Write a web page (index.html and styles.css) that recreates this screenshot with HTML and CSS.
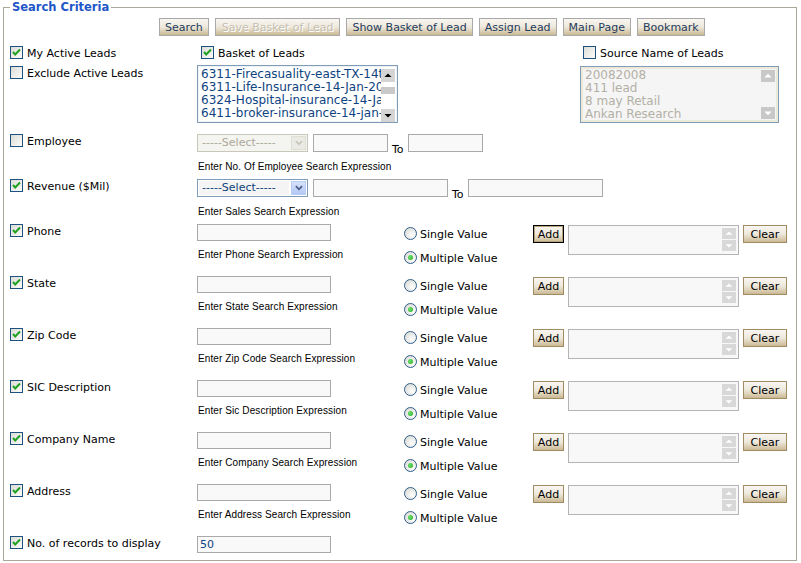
FILE: index.html
```html
<!DOCTYPE html>
<html lang="en">
<head>
  <meta charset="UTF-8">
  <title>Search Criteria</title>
  <link rel="stylesheet" href="styles.css">
</head>
<body>
  <fieldset class="criteria">
    <legend>Search Criteria</legend>

    <div class="toolbar">
      <button class="btn">Search</button>
      <button class="btn" disabled>Save Basket of Lead</button>
      <button class="btn">Show Basket of Lead</button>
      <button class="btn">Assign Lead</button>
      <button class="btn">Main Page</button>
      <button class="btn">Bookmark</button>
    </div>

    <div class="row row-top">
      <label class="check"><span class="cb on"><svg viewBox="0 0 11 11"><polyline points="2,5 4.2,7.5 9,2.5"/></svg></span>My Active Leads</label>
      <label class="check basket"><span class="cb on"><svg viewBox="0 0 11 11"><polyline points="2,5 4.2,7.5 9,2.5"/></svg></span>Basket of Leads</label>
      <label class="check source"><span class="cb"></span>Source Name of Leads</label>
    </div>

    <div class="row row-lists">
      <label class="check"><span class="cb"></span>Exclude Active Leads</label>
      <div class="listbox basket-list">
        <div class="list-items">
          <div>6311-Firecasuality-east-TX-14th-Jan</div>
          <div>6311-Life-Insurance-14-Jan-2008</div>
          <div>6324-Hospital-insurance-14-Jan</div>
          <div>6411-broker-insurance-14-jan-08</div>
        </div>
        <div class="scroll">
          <span class="arrow"><svg viewBox="0 0 13 13"><path d="M3 8h7L6.5 4.5z"/></svg></span>
          <span class="thumb"></span>
          <span class="arrow"><svg viewBox="0 0 13 13"><path d="M3 5h7L6.5 8.5z"/></svg></span>
        </div>
      </div>
      <div class="listbox source-list">
        <div class="list-items">
          <div>20082008</div>
          <div>411 lead</div>
          <div>8 may Retail</div>
          <div>Ankan Research</div>
        </div>
        <div class="scroll">
          <span class="arrow"><svg viewBox="0 0 13 13"><path d="M2.5 8h8L6.5 4z"/></svg></span>
          <span class="arrow"><svg viewBox="0 0 13 13"><path d="M2.5 5h8L6.5 9z"/></svg></span>
        </div>
      </div>
    </div>

    <div class="row row-range">
      <label class="check"><span class="cb"></span>Employee</label>
      <div class="range-cell">
        <div class="range">
          <div class="select disabled"><span class="select-text">-----Select-----</span><span class="drop"><svg viewBox="0 0 9 6"><path d="M1 1l3.5 3.5L8 1"/></svg></span></div>
          <input class="field short" type="text">
          <span class="to">To</span>
          <input class="field short" type="text">
        </div>
        <div class="hint">Enter No. Of Employee Search Expression</div>
      </div>
    </div>

    <div class="row row-range">
      <label class="check"><span class="cb on"><svg viewBox="0 0 11 11"><polyline points="2,5 4.2,7.5 9,2.5"/></svg></span>Revenue ($Mil)</label>
      <div class="range-cell">
        <div class="range">
          <div class="select"><span class="select-text">-----Select-----</span><span class="drop"><svg viewBox="0 0 9 6"><path d="M1 1l3.5 3.5L8 1"/></svg></span></div>
          <input class="field long" type="text">
          <span class="to">To</span>
          <input class="field long" type="text">
        </div>
        <div class="hint">Enter Sales Search Expression</div>
      </div>
    </div>

    <div class="row row-field">
      <label class="check"><span class="cb on"><svg viewBox="0 0 11 11"><polyline points="2,5 4.2,7.5 9,2.5"/></svg></span>Phone</label>
      <div><input class="field" type="text"><div class="hint">Enter Phone Search Expression</div></div>
      <div class="radios">
        <label class="radio"><span class="rb"></span>Single Value</label>
        <label class="radio"><span class="rb on"></span>Multiple Value</label>
      </div>
      <button class="btn small add focus">Add</button>
      <div class="mini-list"><div class="scroll"><span class="arrow"><svg viewBox="0 0 13 13"><path d="M2.5 8h8L6.5 4z"/></svg></span><span class="arrow"><svg viewBox="0 0 13 13"><path d="M2.5 5h8L6.5 9z"/></svg></span></div></div>
      <button class="btn small clear">Clear</button>
    </div>

    <div class="row row-field">
      <label class="check"><span class="cb on"><svg viewBox="0 0 11 11"><polyline points="2,5 4.2,7.5 9,2.5"/></svg></span>State</label>
      <div><input class="field" type="text"><div class="hint">Enter State Search Expression</div></div>
      <div class="radios">
        <label class="radio"><span class="rb"></span>Single Value</label>
        <label class="radio"><span class="rb on"></span>Multiple Value</label>
      </div>
      <button class="btn small add">Add</button>
      <div class="mini-list"><div class="scroll"><span class="arrow"><svg viewBox="0 0 13 13"><path d="M2.5 8h8L6.5 4z"/></svg></span><span class="arrow"><svg viewBox="0 0 13 13"><path d="M2.5 5h8L6.5 9z"/></svg></span></div></div>
      <button class="btn small clear">Clear</button>
    </div>

    <div class="row row-field">
      <label class="check"><span class="cb on"><svg viewBox="0 0 11 11"><polyline points="2,5 4.2,7.5 9,2.5"/></svg></span>Zip Code</label>
      <div><input class="field" type="text"><div class="hint">Enter Zip Code Search Expression</div></div>
      <div class="radios">
        <label class="radio"><span class="rb"></span>Single Value</label>
        <label class="radio"><span class="rb on"></span>Multiple Value</label>
      </div>
      <button class="btn small add">Add</button>
      <div class="mini-list"><div class="scroll"><span class="arrow"><svg viewBox="0 0 13 13"><path d="M2.5 8h8L6.5 4z"/></svg></span><span class="arrow"><svg viewBox="0 0 13 13"><path d="M2.5 5h8L6.5 9z"/></svg></span></div></div>
      <button class="btn small clear">Clear</button>
    </div>

    <div class="row row-field">
      <label class="check"><span class="cb on"><svg viewBox="0 0 11 11"><polyline points="2,5 4.2,7.5 9,2.5"/></svg></span>SIC Description</label>
      <div><input class="field" type="text"><div class="hint">Enter Sic Description Expression</div></div>
      <div class="radios">
        <label class="radio"><span class="rb"></span>Single Value</label>
        <label class="radio"><span class="rb on"></span>Multiple Value</label>
      </div>
      <button class="btn small add">Add</button>
      <div class="mini-list"><div class="scroll"><span class="arrow"><svg viewBox="0 0 13 13"><path d="M2.5 8h8L6.5 4z"/></svg></span><span class="arrow"><svg viewBox="0 0 13 13"><path d="M2.5 5h8L6.5 9z"/></svg></span></div></div>
      <button class="btn small clear">Clear</button>
    </div>

    <div class="row row-field">
      <label class="check"><span class="cb on"><svg viewBox="0 0 11 11"><polyline points="2,5 4.2,7.5 9,2.5"/></svg></span>Company Name</label>
      <div><input class="field" type="text"><div class="hint">Enter Company Search Expression</div></div>
      <div class="radios">
        <label class="radio"><span class="rb"></span>Single Value</label>
        <label class="radio"><span class="rb on"></span>Multiple Value</label>
      </div>
      <button class="btn small add">Add</button>
      <div class="mini-list"><div class="scroll"><span class="arrow"><svg viewBox="0 0 13 13"><path d="M2.5 8h8L6.5 4z"/></svg></span><span class="arrow"><svg viewBox="0 0 13 13"><path d="M2.5 5h8L6.5 9z"/></svg></span></div></div>
      <button class="btn small clear">Clear</button>
    </div>

    <div class="row row-field">
      <label class="check"><span class="cb on"><svg viewBox="0 0 11 11"><polyline points="2,5 4.2,7.5 9,2.5"/></svg></span>Address</label>
      <div><input class="field" type="text"><div class="hint">Enter Address Search Expression</div></div>
      <div class="radios">
        <label class="radio"><span class="rb"></span>Single Value</label>
        <label class="radio"><span class="rb on"></span>Multiple Value</label>
      </div>
      <button class="btn small add">Add</button>
      <div class="mini-list"><div class="scroll"><span class="arrow"><svg viewBox="0 0 13 13"><path d="M2.5 8h8L6.5 4z"/></svg></span><span class="arrow"><svg viewBox="0 0 13 13"><path d="M2.5 5h8L6.5 9z"/></svg></span></div></div>
      <button class="btn small clear">Clear</button>
    </div>

    <div class="row row-records">
      <label class="check"><span class="cb on"><svg viewBox="0 0 11 11"><polyline points="2,5 4.2,7.5 9,2.5"/></svg></span>No. of records to display</label>
      <div><input class="field records" type="text" value="50"></div>
    </div>
  </fieldset>
</body>
</html>
```

FILE: styles.css
```css
body {
  margin: 0;
  background: #fff;
  color: #000;
  font-family: "DejaVu Sans", Verdana, sans-serif;
  font-size: 11px;
}
.criteria {
  margin: 0 4px 0 3px;
  padding: 0 6px 7px 6px;
  border: 1px solid #aca899;
  min-width: 0;
}
legend {
  padding: 0 2px;
  font-weight: bold;
  font-size: 11.5px;
  line-height: 14px;
  color: #1f56c7;
}

/* buttons */
.toolbar {
  display: flex;
  gap: 6px;
  height: 18px;
  margin-top: 4px;
  padding-left: 149px;
}
.btn {
  box-sizing: border-box;
  height: 18px;
  padding: 0 5px;
  border: 1px solid #a9a9a9;
  background: linear-gradient(#f8f6f1, #eee8dc 50%, #d9ccb0 80%, #c9b894);
  font-family: "DejaVu Sans", Verdana, sans-serif;
  font-size: 11px;
  line-height: 15px;
  color: #1e3c5c;
  cursor: pointer;
}
.btn:disabled {
  padding: 0 6px;
  color: #c6bfb0;
  text-shadow: 1px 1px 0 #fff;
}
.btn.small {
  margin-top: 2px;
  border-color: #a08b62;
  color: #000;
  padding: 0;
}
.btn.add {
  width: 31px;
}
.btn.clear {
  width: 44px;
}
.btn.focus {
  border-color: #000;
  box-shadow: inset 0 0 0 1px #b8a47c;
}

/* rows */
.row {
  display: grid;
  grid-template-columns: 187px 207px 129px 35px 175px 1fr;
  align-items: start;
}
.row-top {
  height: 20px;
  margin-top: 9px;
}
.row-lists {
  height: 68px;
}
.row-range {
  height: 45px;
}
.row-field {
  height: 52px;
}
.row-records {
  height: 18px;
}

/* checkboxes */
.check {
  display: flex;
  align-items: flex-start;
  gap: 4px;
  margin-top: 1px;
  line-height: 15px;
  white-space: nowrap;
}
.check.basket {
  margin-left: 4px;
}
.check.source {
  grid-column: 5 / 7;
  margin-left: 15px;
}
.cb {
  box-sizing: border-box;
  width: 13px;
  height: 13px;
  flex: none;
  border: 1px solid #1c5180;
  background: linear-gradient(135deg, #dcdcd7, #fbfbf9);
  display: flex;
}
.cb svg {
  width: 11px;
  height: 11px;
}
.cb polyline {
  fill: none;
  stroke: #21a121;
  stroke-width: 2;
}

/* radios */
.radios {
  display: flex;
  flex-direction: column;
  gap: 11px;
  margin-top: 4px;
}
.radio {
  display: flex;
  align-items: flex-start;
  gap: 3px;
  height: 13px;
  line-height: 15px;
  white-space: nowrap;
}
.rb {
  box-sizing: border-box;
  width: 13px;
  height: 13px;
  flex: none;
  border-radius: 50%;
  border: 1px solid #2f5e8c;
  background: radial-gradient(circle at 65% 65%, #fff, #dcdcd7 80%);
  display: flex;
  align-items: center;
  justify-content: center;
}
.rb.on::after {
  content: "";
  width: 5px;
  height: 5px;
  border-radius: 50%;
  background: radial-gradient(circle at 40% 40%, #6ee46e, #1ea81e);
}

/* list boxes */
.listbox {
  box-sizing: border-box;
  display: flex;
  overflow: hidden;
  border: 1px solid #7f9db9;
}
.list-items {
  flex: 1;
  overflow: hidden;
  white-space: nowrap;
  font-size: 12px;
  line-height: 13px;
  padding: 2px 0 0 3px;
}
.basket-list {
  width: 201px;
  height: 58px;
  color: #0e4380;
  box-shadow: inset 0 0 0 1px #eef2f6;
}
.basket-list .scroll {
  width: 14px;
  padding: 3px 2px 0 0;
}
.basket-list .arrow {
  background: #d4d4d4;
  height: 13px;
}
.basket-list .arrow path {
  fill: #000;
}
.thumb {
  display: block;
  height: 7px;
  margin: 5px 0 auto;
  background: #c9c9c9;
}
.source-list {
  grid-column: 5 / 7;
  margin: 1px 0 0 12px;
  width: 199px;
  height: 57px;
  background: #f5f5f5;
  box-shadow: inset 0 0 0 2px #ece9d8;
  padding: 0 2px 0 0;
}
.source-list .list-items {
  padding-left: 4px;
  color: #b3b0a6;
}
.source-list .scroll {
  width: 14px;
  padding: 3px 1px 3px 0;
  justify-content: space-between;
}
.scroll {
  display: flex;
  flex-direction: column;
}
.arrow {
  display: flex;
  background: #c8c8c8;
  height: 12px;
}
.arrow svg {
  width: 100%;
  height: 100%;
}
.arrow path {
  fill: #fff;
}

/* selects and inputs */
.range-cell {
  grid-column: 2 / 7;
}
.range {
  display: flex;
  align-items: flex-start;
  height: 19px;
  margin-top: 1px;
}
.select {
  box-sizing: border-box;
  display: flex;
  align-items: center;
  width: 111px;
  height: 18px;
  border: 1px solid #7f9db9;
  background: #fff;
  color: #0e3f7a;
  padding: 1px;
}
.select-text {
  flex: 1;
  padding-left: 3px;
  line-height: 14px;
  background: #f4f4f4;
}
.drop {
  box-sizing: border-box;
  width: 15px;
  height: 14px;
  display: flex;
  align-items: center;
  justify-content: center;
  margin-left: 2px;
  border: 1px solid #b9cdf2;
  background: linear-gradient(#d6e2fb, #b2c8f5);
}
.drop svg {
  width: 8px;
  height: 6px;
}
.drop path {
  fill: none;
  stroke: #4b5f86;
  stroke-width: 2;
}
.select.disabled {
  border-color: #c9c7ba;
  background: #f4f4f0;
  color: #aca899;
}
.select.disabled .select-text {
  background: #f4f4f0;
}
.select.disabled .drop {
  border-color: #e0dfd6;
  background: #ebebe6;
}
.select.disabled .drop path {
  stroke: #c9c7ba;
}
.field {
  box-sizing: border-box;
  width: 134px;
  height: 17px;
  margin: 1px 0 0;
  padding: 0 2px;
  border: 1px solid #a9a9a9;
  background: #f9f9f9;
  font-family: "DejaVu Sans", Verdana, sans-serif;
  font-size: 11px;
  color: #0e4380;
  display: block;
}
.range .field {
  height: 18px;
  margin: 0 0 0 5px;
}
.range .field.short {
  width: 75px;
}
.range .field.long {
  width: 135px;
}
.to {
  align-self: flex-end;
  margin: 0 0 -3px 4px;
  line-height: 13px;
}
.range .to + .field {
  margin-left: 4px;
}
.hint {
  font-family: "Liberation Sans", Arial, sans-serif;
  font-size: 10px;
  line-height: 12px;
  letter-spacing: 0.1px;
  margin: 8px 0 0 1px;
  white-space: nowrap;
}
.mini-list {
  box-sizing: border-box;
  display: flex;
  justify-content: flex-end;
  width: 171px;
  height: 30px;
  margin-top: 2px;
  border: 1px solid #b4b4b4;
  background: #f8f8f8;
  padding: 2px 2px 0 0;
}
.mini-list .scroll {
  width: 14px;
  gap: 1px;
}
.mini-list .arrow {
  background: #d8d8d8;
  height: 11px;
}
```
